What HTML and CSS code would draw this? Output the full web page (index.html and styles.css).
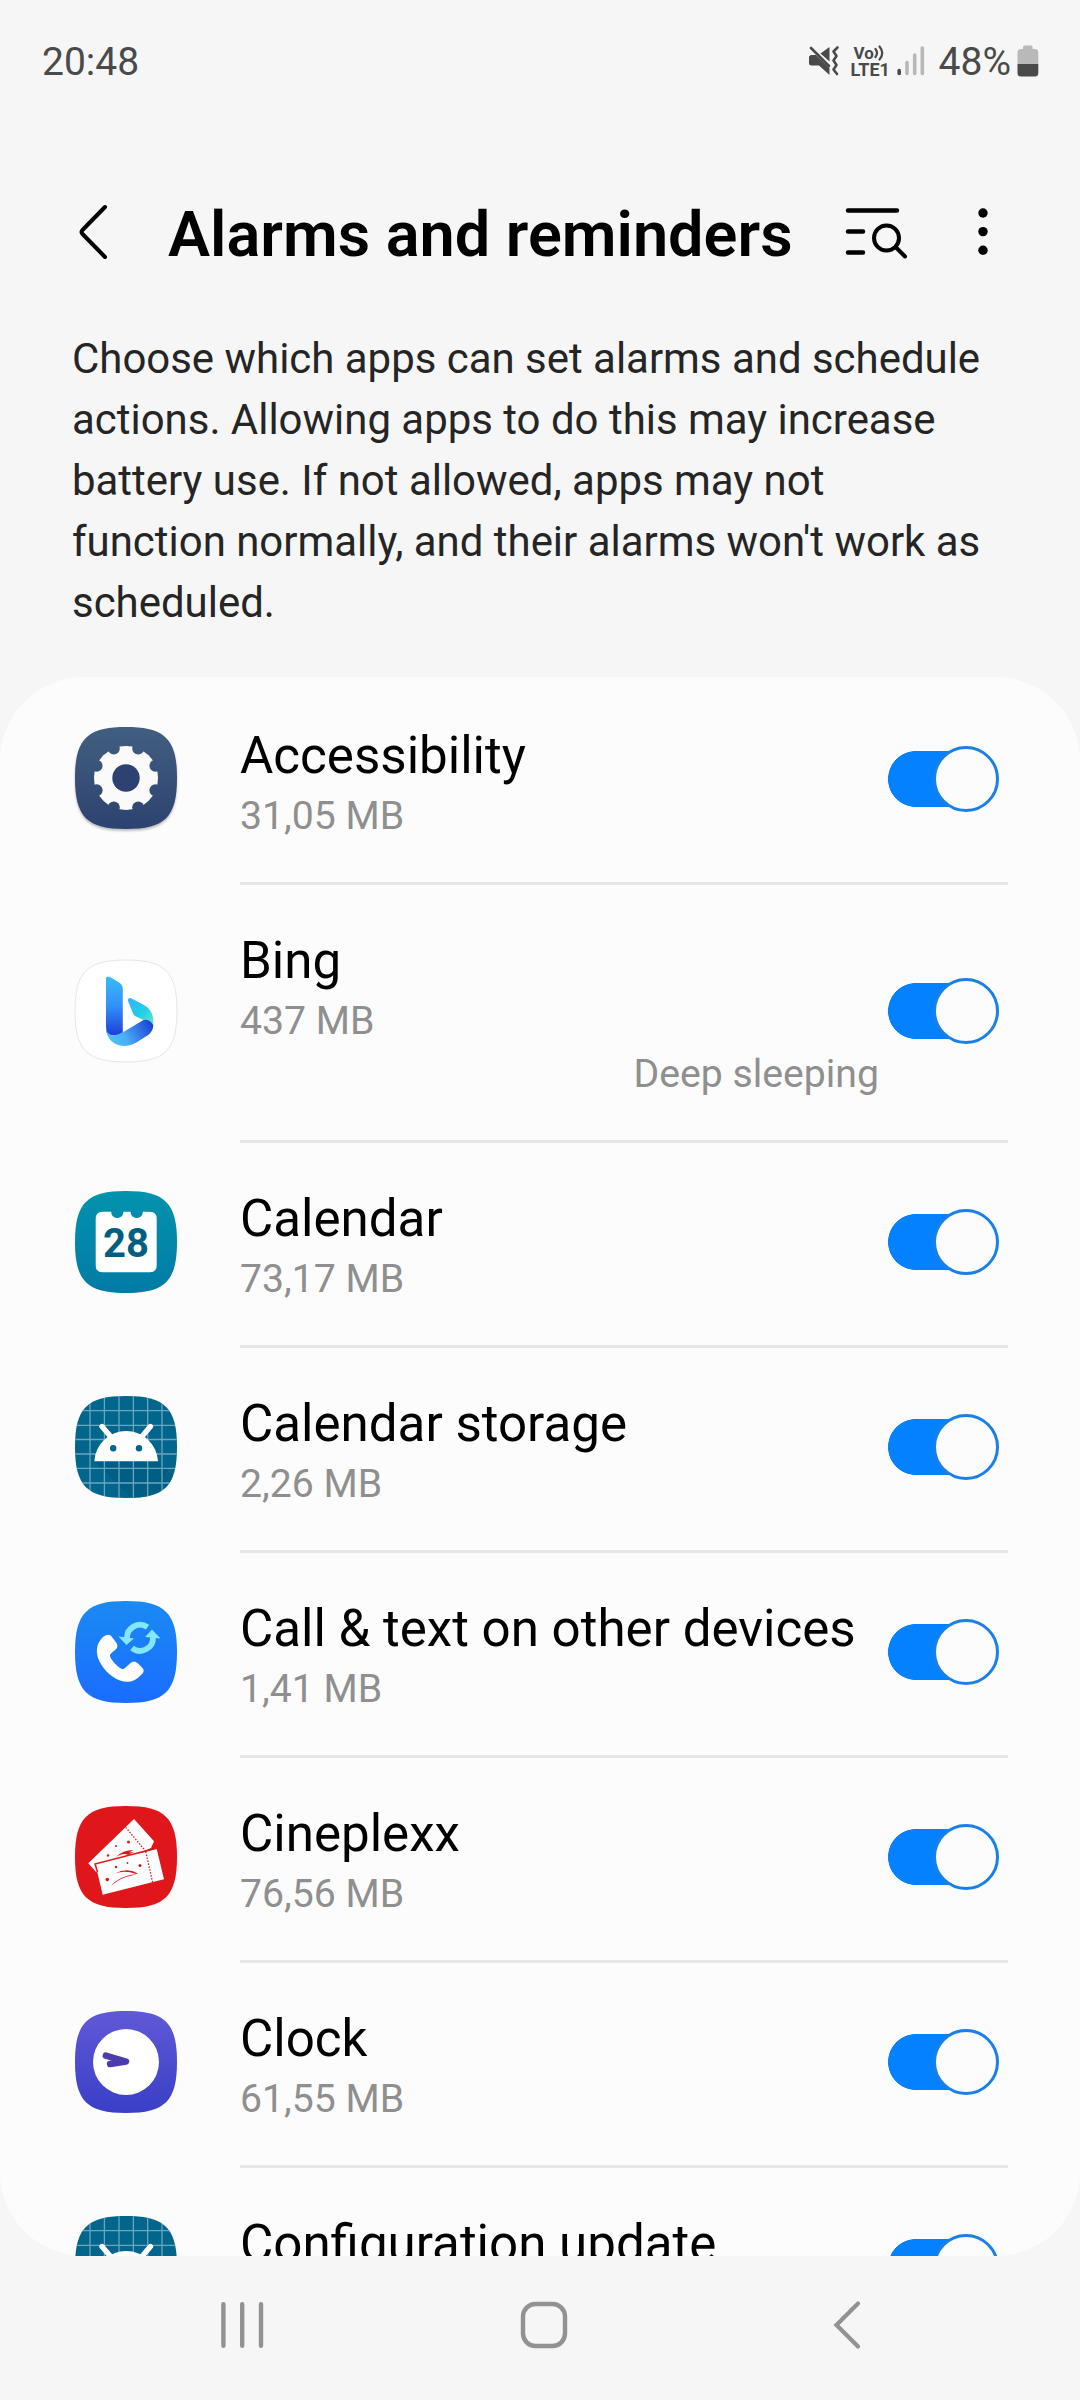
FILE: index.html
```html
<!DOCTYPE html>
<html lang="en">
<head>
<meta charset="utf-8">
<title>Alarms and reminders</title>
<link rel="stylesheet" href="styles.css">
</head>
<body>
<svg class="defs" width="0" height="0" aria-hidden="true">
  <defs>
    <path id="squircle" d="M0 51C0 12 12 0 51 0S102 12 102 51 90 102 51 102 0 90 0 51Z"/>
    <clipPath id="squircle-clip"><use href="#squircle"/></clipPath>
    <linearGradient id="g-gear" x2="0" y2="1"><stop stop-color="#415f80"/><stop offset="1" stop-color="#2d4270"/></linearGradient>
    <linearGradient id="g-cal" x2="0" y2="1"><stop stop-color="#0293ad"/><stop offset="1" stop-color="#027ba6"/></linearGradient>
    <linearGradient id="g-call" x2="0" y2="1"><stop stop-color="#1a8af3"/><stop offset="1" stop-color="#1a6dff"/></linearGradient>
    <linearGradient id="g-clock" x2="0" y2="1"><stop stop-color="#6059d8"/><stop offset="1" stop-color="#393fc6"/></linearGradient>
    <linearGradient id="g-b1" x2="0" y2="1"><stop stop-color="#37bdf5"/><stop offset=".5" stop-color="#3390f8"/><stop offset="1" stop-color="#1b3fd8"/></linearGradient>
    <linearGradient id="g-b2" x1="0" y1=".6" x2="1" y2=".3"><stop stop-color="#4cc4fa"/><stop offset=".35" stop-color="#4aaef5"/><stop offset="1" stop-color="#1a41d6"/></linearGradient>
    <linearGradient id="g-b3" x2="1" y2="1"><stop offset=".1" stop-color="#35b5ff"/><stop offset=".55" stop-color="#1fd0e6"/><stop offset="1" stop-color="#6fe6c4"/></linearGradient>
    <mask id="gear-mask">
      <circle cx="51" cy="51" r="32" fill="#fff"/>
      <g fill="#000">
        <circle cx="51" cy="51" r="13.7"/>
        <circle cx="80.4" cy="63.2" r="6"/><circle cx="63.2" cy="80.4" r="6"/>
        <circle cx="38.8" cy="80.4" r="6"/><circle cx="21.6" cy="63.2" r="6"/>
        <circle cx="21.6" cy="38.8" r="6"/><circle cx="38.8" cy="21.6" r="6"/>
        <circle cx="63.2" cy="21.6" r="6"/><circle cx="80.4" cy="38.8" r="6"/>
      </g>
    </mask>
    <symbol id="android" viewBox="0 0 102 102">
      <g clip-path="url(#squircle-clip)">
        <rect width="102" height="102" fill="#01658c"/>
        <path d="M19 65H83L102 84V102H56Z" fill="#005a80" opacity=".55"/>
        <path d="M15 0V102M29.4 0V102M44 0V102M58.4 0V102M72.7 0V102M87 0V102M0 14.7H102M0 29.3H102M0 43.5H102M0 58H102M0 72.4H102M0 87H102" stroke="#6aa6bf" stroke-width="1.3"/>
      </g>
      <path d="M19.3 65.3A31.9 32 0 0 1 83 65.3Z" fill="#fff"/>
      <path d="M27 30.5L36 41M75.4 30.5L66.500 41" stroke="#fff" stroke-width="5.400" stroke-linecap="round"/>
      <circle cx="38.200" cy="52.300" r="3.200" fill="#01658c"/><circle cx="64" cy="52.300" r="3.200" fill="#01658c"/>
    </symbol>
  </defs>
</svg>

<div class="screen">
  <div class="status">
    <span class="clock">20:48</span>
    <div class="status-icons">
      <svg class="mute" width="32" height="32" viewBox="0 0 32 32">
        <path d="M1 12.500Q1 10 3.500 10H8L21.500 23V30L11 20.500H3.500Q1 20.500 1 18ZM21.500 2V16.500L12.500 8.500Z" fill="#4a4a4a"/>
        <path d="M3 3L21 21" stroke="#4a4a4a" stroke-width="2.600" stroke-linecap="round"/>
        <path d="M29.500 2.500L25.500 6.500 28.500 11 25.500 15.500 28.500 20 25.500 24.500 29 29" fill="none" stroke="#4a4a4a" stroke-width="2.600" stroke-linejoin="round" stroke-linecap="round"/>
      </svg>
      <div class="volte">
        <span class="vo">Vo<svg width="11" height="16" viewBox="0 0 11 16"><path d="M1.500 4Q4.500 8 1.500 12M5.500 1.500Q11 8 5.500 14.500" fill="none" stroke="#4a4a4a" stroke-width="2.200" stroke-linecap="round"/></svg></span>
        <span class="lte">LTE1</span>
      </div>
      <svg class="signal" width="28" height="32" viewBox="0 0 28 32" stroke-width="3.600" stroke-linecap="round">
        <path d="M2.200 25.500V28.500" stroke="#4a4a4a"/>
        <path d="M10 17.500V28.500M17.700 10V28.500M25.300 3V28.500" stroke="#b8b8b8"/>
      </svg>
      <span class="percent">48%</span>
      <svg class="battery" width="22" height="32" viewBox="0 0 22 32">
        <path d="M6 2Q6 0.500 7.500 .5H14Q15.500 .5 15.500 2V4H18Q21.300 4 21.300 7.500V19H.5V7.500Q.5 4 4 4H6Z" fill="#b9b9b9"/>
        <path d="M.5 19H21.300V28Q21.300 31.500 18 31.500H4Q.5 31.500 .5 28Z" fill="#4a4a4a"/>
      </svg>
    </div>
  </div>

  <header class="header">
    <svg class="back" width="34" height="60" viewBox="0 0 34 60"><path d="M29 5L6.500 28Q4.500 30 6.500 32L29 55" fill="none" stroke="#000" stroke-width="4" stroke-linecap="round"/></svg>
    <h1>Alarms and reminders</h1>
    <svg class="search" width="64" height="54" viewBox="0 0 64 54" fill="none" stroke="#000" stroke-width="4.500" stroke-linecap="round">
      <path d="M4 5.500H53M4 26.500H19M4 47.500H19" />
      <circle cx="42.500" cy="33" r="12.500" stroke-width="4"/>
      <path d="M51.500 42L61 51.500" stroke-width="4"/>
    </svg>
    <svg class="more" width="12" height="50" viewBox="0 0 12 50"><circle cx="6" cy="6" r="4.700"/><circle cx="6" cy="24.600" r="4.700"/><circle cx="6" cy="43.300" r="4.700"/></svg>
  </header>

  <p class="intro">Choose which apps can set alarms and schedule actions. Allowing apps to do this may increase battery use. If not allowed, apps may not function normally, and their alarms won't work as scheduled.</p>

  <main class="viewport">
    <div class="card-bg">
      <div class="row">
        <svg class="icon raised" viewBox="0 0 102 102">
          <use href="#squircle" fill="url(#g-gear)"/>
          <circle cx="51" cy="51" r="15" fill="#2d4270"/>
          <rect width="102" height="102" fill="#fafafb" mask="url(#gear-mask)"/>
        </svg>
        <div class="text"><div class="name">Accessibility</div><div class="size">31,05 MB</div></div>
        <div class="toggle"></div>
      </div>
      <div class="row">
        <svg class="icon" viewBox="0 0 102 102">
          <use href="#squircle" fill="#fff" stroke="#e6e6e6"/>
          <path d="M31 68C31 79 39.500 86 50 86C55 85.800 59 84 63 81.500L74 74.500C80 69 79 61 75.500 59.500Q72 58 68.500 60L47.500 72.500L39 76Q33 75 31 68Z" fill="url(#g-b2)"/>
          <path d="M53 41C52.500 38.500 54.500 37.500 56.500 38.500L68 44.500C76 48.500 79.500 56 78 65C76.500 61.500 72.500 59 68.500 60L61 56.500Q58.800 55.500 58 53.500Z" fill="url(#g-b3)"/>
          <path d="M31 18.500C31 16.500 33 15.800 35 17L44 22.500Q47.800 25 47.800 29V72.200Q43.500 75 39.500 75.500Q31 75.500 31 67Z" fill="url(#g-b1)"/>
        </svg>
        <div class="text"><div class="name">Bing</div><div class="size">437 MB</div><div class="state">Deep sleeping</div></div>
        <div class="toggle"></div>
      </div>
      <div class="row">
        <svg class="icon" viewBox="0 0 102 102">
          <use href="#squircle" fill="url(#g-cal)"/>
          <path d="M27.700 20.700H36.200C36.200 29 48.400 29 48.400 20.700H55.600C55.600 29 67.800 29 67.800 20.700H74.700Q81.700 20.700 81.700 27.700V74.300Q81.700 81.300 74.700 81.300H27.700Q20.700 81.300 20.700 74.300V27.700Q20.700 20.700 27.700 20.700Z" fill="#fff"/>
          <text x="51" y="65.700" class="date">28</text>
        </svg>
        <div class="text"><div class="name">Calendar</div><div class="size">73,17 MB</div></div>
        <div class="toggle"></div>
      </div>
      <div class="row">
        <svg class="icon" viewBox="0 0 102 102"><use href="#android"/></svg>
        <div class="text"><div class="name">Calendar storage</div><div class="size">2,26 MB</div></div>
        <div class="toggle"></div>
      </div>
      <div class="row">
        <svg class="icon" viewBox="0 0 102 102">
          <use href="#squircle" fill="url(#g-call)"/>
          <path d="M27.500 36.500C31.500 33 34.500 32.800 37 36L41.500 42C43.500 45.500 42 47.500 39.500 49.500L36.500 52C34.500 54 34.500 55 36 57.500C38.500 61.500 41.500 64.500 45 67C47 68.500 48.500 68.500 50 67L55.500 62C58 60 60 60 62.500 62L67 66.500C69.500 69.500 69 71.500 66 74C60 80.500 53 82.500 45 79.500C34 75 27 67 23 57C20.500 49 22 42 27.500 36.500Z" fill="#fff"/>
          <path d="M52 37A13 13 0 0 1 72.500 26.200M78 36A13 13 0 0 1 57 47" fill="none" stroke="#85e6ff" stroke-width="5.800"/>
          <path d="M43.500 35.500L59 37.500 51.500 44ZM77 28.500L85.500 37.500 70 36Z" fill="#85e6ff"/>
        </svg>
        <div class="text"><div class="name">Call &amp; text on other devices</div><div class="size">1,41 MB</div></div>
        <div class="toggle"></div>
      </div>
      <div class="row">
        <svg class="icon" viewBox="0 0 102 102">
          <use href="#squircle" fill="#df161a"/>
          <path d="M59 13L79 35.300 76 42 21 66 13.300 57.300Z" fill="#fff"/>
          <path d="M50.700 21.300L70.500 45" stroke="#df161a" stroke-width="1.300" stroke-dasharray="1.500 1.500"/>
          <path d="M41 51Q48 44 58 44L54 46.500 59 46 53 49Q49 46 41 51Z" fill="#df161a"/>
          <circle cx="53.500" cy="36" r="1.500" fill="#df161a"/><circle cx="41" cy="40" r="1" fill="#df161a"/><circle cx="33" cy="49.500" r="1.200" fill="#df161a"/>
          <path d="M20.500 58.500L81.700 43 89 73.300 27.700 88.700Z" fill="#fff"/>
          <path d="M22.500 66L20 58 70.500 45 80 42.500" fill="none" stroke="#df161a" stroke-width="1.500"/>
          <path d="M70.700 45.700L77.700 76.700" stroke="#df161a" stroke-width="1.300" stroke-dasharray="1.500 1.500"/>
          <path d="M36 80Q44 70 61 68Q50 64 40 67.500Q52 61 63 67.500L57 69.500Q46 71 36 80Z" fill="#df161a"/>
          <circle cx="32.300" cy="73.500" r="1.800" fill="#df161a"/><circle cx="41" cy="61" r="1.200" fill="#df161a"/><circle cx="52.500" cy="57" r=".9" fill="#df161a"/><circle cx="65" cy="59.500" r="1.500" fill="#df161a"/>
        </svg>
        <div class="text"><div class="name">Cineplexx</div><div class="size">76,56 MB</div></div>
        <div class="toggle"></div>
      </div>
      <div class="row">
        <svg class="icon" viewBox="0 0 102 102">
          <use href="#squircle" fill="url(#g-clock)"/>
          <circle cx="51" cy="51" r="33" fill="#fff"/>
          <path d="M30.800 44.600L51 50.500L35 53" fill="none" stroke="#4a3bae" stroke-width="6.400" stroke-linecap="round" stroke-linejoin="round"/>
        </svg>
        <div class="text"><div class="name">Clock</div><div class="size">61,55 MB</div></div>
        <div class="toggle"></div>
      </div>
    </div>
    <div class="row partial">
      <svg class="icon" viewBox="0 0 102 102"><use href="#android"/></svg>
      <div class="text"><div class="name">Configuration update</div><div class="size">&nbsp;</div></div>
      <div class="toggle"></div>
    </div>
  </main>

  <nav class="nav">
    <svg width="48" height="52" viewBox="0 0 48 52"><path d="M5.400 5.200V46.800M24.200 5.200V46.800M43 5.200V46.800" stroke="#929292" stroke-width="4.400" stroke-linecap="round"/></svg>
    <svg class="home" width="50" height="52" viewBox="0 0 50 52"><rect x="4" y="5" width="42" height="42" rx="12.500" fill="none" stroke="#929292" stroke-width="4.400"/></svg>
    <svg class="prev" width="32" height="52" viewBox="0 0 32 52"><path d="M27 4.500L5.500 26 27 47.500" fill="none" stroke="#929292" stroke-width="4.200" stroke-linecap="round"/></svg>
  </nav>
</div>
</body>
</html>
```
FILE: styles.css
```css
*, *::after { box-sizing: border-box; }

body {
  margin: 0;
  background: #f6f6f6;
  font-family: Roboto, sans-serif;
  color: #000;
}

svg { display: block; flex: none; }
.defs { position: absolute; }

.screen {
  width: 1080px;
  height: 2400px;
  display: flex;
  flex-direction: column;
  overflow: hidden;
}

/* Status bar */
.status {
  height: 122px;
  padding: 0 41px 0 42px;
  display: flex;
  align-items: center;
  justify-content: space-between;
  color: #4a4a4a;
  font-size: 39px;
}
.clock, .percent { padding-top: 2px; }
.status-icons { display: flex; align-items: center; }
.volte {
  width: 40px;
  margin-left: 11px;
  display: flex;
  flex-direction: column;
  font-weight: 700;
}
.vo {
  display: flex;
  align-items: center;
  padding-left: 3px;
  font-size: 17px;
  line-height: 16px;
}
.lte { font-size: 18px; line-height: 17px; }
.signal { margin-left: 6px; }
.percent { margin-left: 14px; }
.battery { margin-left: 6px; }

/* Header */
.header {
  height: 206px;
  display: flex;
  align-items: center;
  padding: 14px 89px 0 76px;
}
h1 {
  width: 621px;
  margin: 5px 0 0 58px;
  font-size: 63px;
  font-weight: 600;
  line-height: 74px;
  white-space: nowrap;
}
.search { margin-left: 55px; }
.more { margin-left: 69px; }

.intro {
  height: 349px;
  margin: 0;
  padding: 0 92px 0 72px;
  font-size: 41.95px;
  line-height: 61px;
  color: #252525;
}

/* App list */
.viewport { height: 1579px; overflow: hidden; }
.card-bg { height: 1579px; border-radius: 84px; background: #fcfcfc; }
.row {
  display: flex;
  align-items: center;
  padding: 0 81px 1px 75px;
}
.row + .row, .partial {
  background: linear-gradient(#e6e6e6, #e6e6e6) 240px 0 / 768px 3px no-repeat;
}
.partial { margin-top: -91px; }
.icon { width: 102px; height: 102px; overflow: visible; }
.raised { margin-top: -2px; filter: drop-shadow(0 2px 1px rgba(0, 0, 0, .25)); }
.text { flex: 1; margin-left: 63px; padding: 48px 9px 38px 0; }
.name { font-size: 51.1px; line-height: 62px; white-space: nowrap; }
.size, .state { font-size: 39.2px; line-height: 53px; color: #8f8f8f; }
.size { margin-top: 3px; }
.state { text-align: right; }
.date {
  font-size: 40px;
  font-weight: 700;
  text-anchor: middle;
  fill: #005f80;
}

.toggle {
  width: 111px;
  height: 66px;
  display: flex;
  justify-content: flex-end;
  background: linear-gradient(#0381fe, #0381fe) 28px 5px / 55px 56px no-repeat,
    radial-gradient(circle at 28px 33px, #0381fe 27.600px, transparent 28.300px);
}
.toggle::after {
  content: "";
  width: 66px;
  height: 66px;
  border: 3px solid #1a80e8;
  border-radius: 50%;
  background: #fcfcfc;
}

/* Navigation bar */
.nav {
  height: 144px;
  padding: 0 0 6px 218px;
  display: flex;
  align-items: center;
}
.home { margin-left: 253px; }
.prev { margin-left: 262px; }
```
